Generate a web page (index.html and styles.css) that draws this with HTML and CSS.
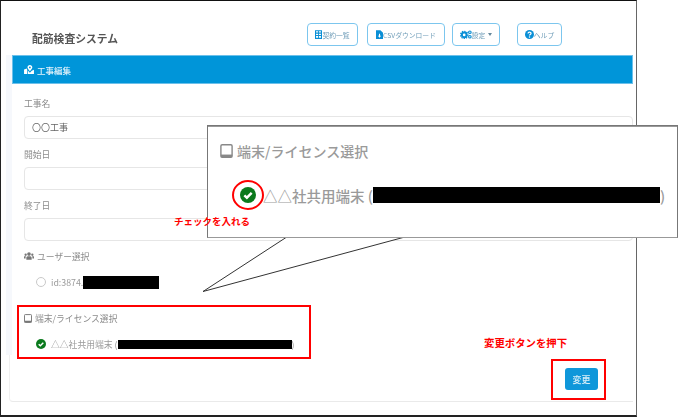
FILE: index.html
```html
<!DOCTYPE html>
<html lang="ja">
<head>
<meta charset="utf-8">
<title>配筋検査システム</title>
<link rel="stylesheet" href="styles.css">
</head>
<body>
<div class="window">
  <header class="top">
    <h1 class="brand">配筋検査システム</h1>
    <nav class="nav">
      <a class="nav-btn btn-list"><svg class="ico" viewBox="0 0 8 10"><path fill="#0a8fd6" fill-rule="evenodd" d="M0 0h8v10H0zM1.200 1.200v1.600h2.300V1.200zm3.300 0v1.600h2.300V1.200zM1.200 4v1.600h2.300V4zm3.300 0v1.600h2.300V4zM1.200 6.800v2h2.300v-2zm3.300 0v2h2.300v-2z"/></svg>契約一覧</a>
      <a class="nav-btn btn-csv"><svg class="ico" viewBox="0 0 8 10"><path fill="#0a8fd6" fill-rule="evenodd" d="M0 0h5l3 3v7H0zM3.400 4v2.400H2.200L4 8.600l1.800-2.200H4.600V4z"/></svg>CSVダウンロード</a>
      <a class="nav-btn btn-set"><svg class="ico ico-wide" viewBox="0 0 13 10"><circle cx="4.500" cy="5.500" r="2.600" fill="none" stroke="#0a8fd6" stroke-width="2.200"/><circle cx="4.500" cy="5.500" r="4.100" fill="none" stroke="#0a8fd6" stroke-width="1.400" stroke-dasharray="1.500 1.200"/><circle cx="10.800" cy="2.500" r="1.400" fill="none" stroke="#0a8fd6" stroke-width="1.300"/><circle cx="10.800" cy="7.500" r="1.400" fill="none" stroke="#0a8fd6" stroke-width="1.300"/></svg>設定<span class="caret"></span></a>
      <a class="nav-btn btn-help"><svg class="ico ico-help" viewBox="0 0 10 10"><circle cx="5" cy="5" r="5" fill="#0a8fd6"/><path fill="none" stroke="#fff" stroke-width="1.400" d="M3.400 3.900C3.400 2 6.700 2 6.700 3.800 6.700 5 5 4.900 5 6.200"/><circle cx="5" cy="7.800" r=".8" fill="#fff"/></svg>ヘルプ</a>
    </nav>
  </header>

  <div class="strip">
    <section class="card">
      <h2 class="card-head"><svg class="head-ico" viewBox="0 0 11 10"><path fill="#fff" fill-rule="evenodd" d="M6.500 0C8 0 9.200 1.200 9.200 2.600 9.200 3.900 7.500 6 6.500 7 5.500 6 3.800 3.900 3.800 2.600 3.800 1.200 5 0 6.500 0zm0 1.700a1 1 0 1 0 0 2 1 1 0 0 0 0-2z"/><path fill="#fff" d="M0 5l3-1.200.6 1.700V10L0 10zM4.400 6.300L6.500 8.500l2.100-2.200 2.400-1V10H4.400z"/></svg>工事編集</h2>
      <div class="card-body">
        <label class="field-label">工事名</label>
        <div class="input">〇〇工事</div>
        <label class="field-label">開始日</label>
        <div class="input"></div>
        <label class="field-label">終了日</label>
        <div class="input"></div>
        <div class="group-label group-user"><svg class="group-ico" viewBox="0 0 12 9"><circle cx="6" cy="2.200" r="2.200" fill="#777"/><circle cx="2" cy="3" r="1.400" fill="#777"/><circle cx="10" cy="3" r="1.400" fill="#777"/><path fill="#777" d="M2.800 9V6.600C2.800 5 4 4.800 6 4.800s3.200.2 3.200 1.800V9zM0 7.500V6c0-1 .6-1.500 2-1.500l-.1 3zM12 7.500V6c0-1-.6-1.500-2-1.500l.1 3z"/></svg>ユーザー選択</div>
        <div class="choice choice-user"><span class="radio"></span><span class="choice-text">id:3874.</span><span class="redact redact-user"></span></div>
        <div class="group-label group-device"><svg class="group-ico tablet" viewBox="0 0 10 11"><rect x=".6" y=".6" width="8.800" height="9.800" rx="1" fill="none" stroke="#777" stroke-width="1.200"/><rect x=".6" y="8.300" width="8.800" height="2.100" fill="#777"/></svg>端末/ライセンス選択</div>
        <div class="choice choice-device"><svg class="check" viewBox="0 0 10 10"><circle cx="5" cy="5" r="5" fill="#0b7a1d"/><path fill="none" stroke="#fff" stroke-width="1.500" d="M2.700 5.200l1.600 1.500 3-3"/></svg><span class="choice-text">△△社共用端末 (</span><span class="redact redact-device"></span><span class="choice-text">)</span></div>
      </div>
    </section>
  </div>
  <footer class="foot"><button class="save">変更</button></footer>
</div>

<div class="mark mark-device"></div>
<div class="mark mark-save"></div>
<p class="note note-save">変更ボタンを押下</p>

<svg class="tail" viewBox="0 0 688 418"><path d="M286 237.500L203 291.500 403 237.500" fill="#fff" stroke="#333" stroke-width="1"/></svg>
<div class="callout">
  <div class="call-title"><svg class="call-tablet" viewBox="0 0 10 11"><rect x=".6" y=".6" width="8.800" height="9.800" rx="1" fill="none" stroke="#888" stroke-width="1.100"/><rect x=".6" y="8.300" width="8.800" height="2.100" fill="#888"/></svg>端末/ライセンス選択</div>
  <div class="call-item"><span class="ring"><svg class="call-check" viewBox="0 0 10 10"><circle cx="5" cy="5" r="5" fill="#0b7a1d"/><path fill="none" stroke="#fff" stroke-width="1.500" d="M2.700 5.200l1.600 1.500 3-3"/></svg></span><span class="call-text">△△社共用端末 (</span><span class="redact redact-call"></span><span class="call-text">)</span></div>
</div>
<p class="note note-check">チェックを入れる</p>
</body>
</html>
```
FILE: styles.css
```css
* { box-sizing: border-box; }
html, body { margin: 0; padding: 0; background: #fff; }
body {
  position: relative;
  width: 688px;
  height: 418px;
  overflow: hidden;
  font-family: "Noto Sans CJK JP", "Noto Sans", sans-serif;
  color: #8a8a8a;
}
.window {
  width: 637px;
  height: 417px;
  border-top: 1px solid #111;
  border-left: 1px solid #222;
  border-bottom: 2px solid #222;
  border-right: 1px solid #666;
  display: flex;
  flex-direction: column;
  filter: blur(0.3px);
}
.top {
  height: 54px;
  flex: none;
  display: flex;
  padding-left: 31px;
}
.brand {
  margin: 29px 0 0;
  font-size: 10.800px;
  line-height: 16px;
  font-weight: 700;
  color: #555;
  width: 275px;
}
.nav {
  display: flex;
  padding-top: 22px;
  height: 46px;
}
.nav-btn {
  height: 23px;
  border: 1px solid #7cc6ee;
  border-radius: 4px;
  display: flex;
  align-items: center;
  justify-content: center;
  font-size: 6.800px;
  color: #6f9db8;
  background: #fff;
}
.btn-list { width: 51px; }
.btn-csv { width: 78px; margin-left: 9px; }
.btn-set { width: 48px; margin-left: 7px; }
.btn-help { width: 45px; margin-left: 17px; }
.ico { width: 7px; height: 9px; flex: none; }
.ico-wide { width: 12px; }
.ico-help { width: 9px; }
.caret {
  width: 0;
  height: 0;
  margin-left: 3px;
  border-top: 3px solid #66889c;
  border-left: 2.500px solid transparent;
  border-right: 2.500px solid transparent;
}
.strip {
  flex: none;
  height: 300px;
  padding-left: 5px;
  margin-right: 3px;
  background: linear-gradient(90deg, #fff 5px, #f6f8fc 5px);
}
.card {
  margin-left: 6px;
  height: 300px;
  background: #fff;
}
.card-head {
  margin: 0;
  height: 29px;
  background: #0095d9;
  border: 1px solid #6cc0ea;
  display: flex;
  align-items: center;
  padding-left: 11px;
  font-size: 8.500px;
  font-weight: 500;
  color: #e4f3fb;
}
.head-ico { width: 10px; height: 9px; margin-right: 3px; }
.card-body { padding: 13px 0 0 12px; }
.field-label {
  display: block;
  height: 14px;
  margin-bottom: 5px;
  font-size: 8.800px;
  line-height: 14px;
  color: #8c8c8c;
}
.input {
  height: 23px;
  margin-bottom: 8.750px;
  border: 1px solid #e6e6e6;
  border-radius: 4px;
  padding-left: 7px;
  font-size: 9px;
  line-height: 21px;
  color: #666;
}
.group-label {
  display: flex;
  align-items: center;
  height: 14px;
  font-size: 8.800px;
  color: #8c8c8c;
}
.group-ico { width: 10px; height: 8px; margin-right: 3px; flex: none; }
.group-ico.tablet { width: 8px; height: 9px; }
.group-user { margin-top: 2px; }
.group-device { margin-top: 21px; }
.choice {
  display: flex;
  align-items: center;
  padding-left: 12px;
  height: 16px;
  font-size: 8.800px;
}
.choice-user { margin-top: 11px; }
.choice-device { margin-top: 11px; }
.choice-text { color: #9a9a9a; white-space: nowrap; }
.radio {
  width: 10px;
  height: 10px;
  border-radius: 50%;
  border: 1px solid #c9c9c9;
  margin-right: 5px;
}
.check { width: 10px; height: 10px; margin-right: 5px; flex: none; }
.redact { background: #000; display: block; flex: none; }
.redact-user { width: 76px; height: 13px; }
.redact-device { width: 174px; height: 9px; }
.redact-call { width: 287px; height: 16px; }
.foot {
  flex: none;
  height: 47px;
  margin: 0 3px 0 8px;
  border-bottom: 1px solid #eaeaea;
  border-left: 1px solid #f0f0f0;
  border-bottom-left-radius: 4px;
  display: flex;
  justify-content: flex-end;
  padding: 13px 35px 0 0;
}
.save {
  width: 33px;
  height: 22px;
  border: 0;
  border-radius: 3px;
  background: #0f97da;
  color: #d6edf8;
  font: 500 9px "Noto Sans CJK JP", sans-serif;
  padding: 0;
}
.mark {
  position: absolute;
  border: 2px solid #f00;
}
.mark-device { left: 17px; top: 305px; width: 294px; height: 54px; }
.mark-save { left: 551px; top: 359px; width: 55px; height: 41px; }
.note {
  position: absolute;
  margin: 0;
  color: #f00;
  font-weight: 700;
  white-space: nowrap;
}
.note-check { left: 174px; top: 214px; font-size: 9.500px; line-height: 14px; }
.note-save { left: 484px; top: 335px; font-size: 10.400px; line-height: 15px; }
.tail {
  position: absolute;
  left: 0;
  top: 0;
  width: 688px;
  height: 418px;
}
.callout {
  position: absolute;
  left: 207px;
  top: 125px;
  width: 471px;
  height: 113px;
  background: #fff;
  border: 1px solid #777;
  border-bottom: 1px solid #999;
  box-shadow: inset 0 1px 0 #999;
  padding: 16px 0 0 12px;
}
.call-title {
  display: flex;
  align-items: center;
  height: 18px;
  font-size: 14px;
  font-weight: 500;
  color: #9a9a9a;
}
.call-tablet { width: 13px; height: 14px; margin-right: 4px; flex: none; }
.call-item {
  position: relative;
  display: flex;
  align-items: center;
  height: 18px;
  margin: 26px 0 0 28px;
  font-size: 14.500px;
  font-weight: 500;
  color: #9a9a9a;
}
.ring {
  position: absolute;
  left: -16px;
  top: -6px;
  width: 32px;
  height: 30px;
  border: 2px solid #f00;
  border-radius: 50%;
  display: flex;
  align-items: center;
  justify-content: center;
}
.call-check { width: 16px; height: 16px; }
.call-text { white-space: nowrap; }
.call-item .ring + .call-text { margin-left: 15px; }
```
